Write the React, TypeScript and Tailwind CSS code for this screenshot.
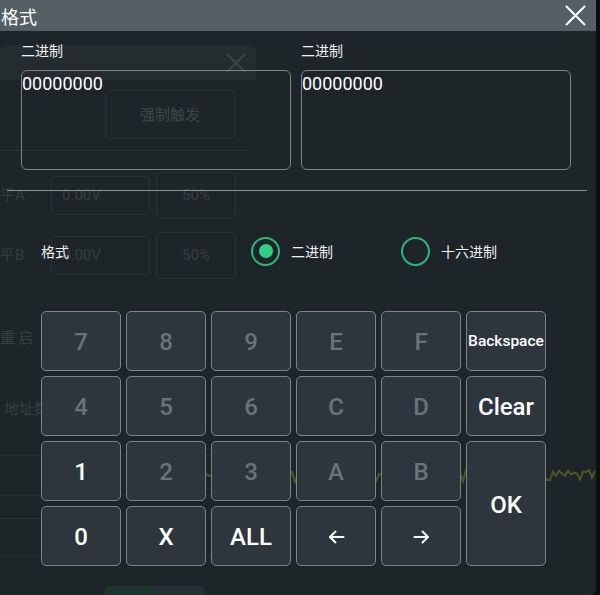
import React from 'react';

const CJK = "font-['Noto_Sans_CJK_SC','Noto_Sans',sans-serif]";

type Key = { label: string; on?: boolean; small?: boolean; tall?: boolean; arrow?: 'left' | 'right' };

const KEYS: Key[] = [
  { label: '7' }, { label: '8' }, { label: '9' }, { label: 'E' }, { label: 'F' }, { label: 'Backspace', on: true, small: true },
  { label: '4' }, { label: '5' }, { label: '6' }, { label: 'C' }, { label: 'D' }, { label: 'Clear', on: true },
  { label: '1', on: true }, { label: '2' }, { label: '3' }, { label: 'A' }, { label: 'B' }, { label: 'OK', on: true, tall: true },
  { label: '0', on: true }, { label: 'X', on: true }, { label: 'ALL', on: true },
  { label: '←', on: true, arrow: 'left' }, { label: '→', on: true, arrow: 'right' },
];

// noisy trace for the scope behind the dialog
const wave = (() => {
  let s = 7;
  const pts: string[] = [];
  for (let x = 0; x <= 400; x += 3) {
    s = (s * 9301 + 49297) % 233280;
    const y = 10 + ((s / 233280) - 0.5) * 12;
    pts.push(`${x},${y.toFixed(1)}`);
  }
  return pts.join(' ');
})();

function Arrow({ dir }: { dir: 'left' | 'right' }) {
  return (
    <svg width="17" height="14" viewBox="0 0 17 14" fill="none" stroke="white" strokeWidth="2" strokeLinecap="round" strokeLinejoin="round">
      {dir === 'left'
        ? <><path d="M15.5 7H2" /><path d="M7.5 1.5 2 7l5.5 5.5" /></>
        : <><path d="M1.5 7H15" /><path d="M9.5 1.5 15 7l-5.5 5.5" /></>}
    </svg>
  );
}

function GhostPanel() {
  return (
    <div className={`w-[260px] h-full overflow-hidden pt-[45px] flex flex-col [&>*]:shrink-0 ${CJK}`}>
      <div className="h-[35px] rounded-t-[6px] bg-[#242c2f] flex items-center justify-end pr-[10px]">
        <svg width="20" height="20" viewBox="0 0 20 20" stroke="#3b4447" strokeWidth="2"><path d="M1 1l18 18M19 1 1 19" /></svg>
      </div>
      <div className="mt-[10px] ml-[105px] w-[130px] h-[49px] rounded-[5px] border border-[#2b3336] flex items-center justify-center text-[15px] text-[#3d4548]">强制触发</div>
      <div className="mt-[11px] w-[250px] h-px bg-[#2b3336]" />
      {['平A', '平B'].map((l, i) => (
        <div key={l} className={`${i === 0 ? 'mt-[21px]' : 'mt-[13px]'} h-[47px] flex items-center text-[15px] text-[#363e41]`}>
          <span className="w-[51px] font-['Roboto',sans-serif]">{l}</span>
          <div className="w-[99px] h-[39px] rounded-[5px] border border-[#2b3336] flex items-center pl-[10px] font-['Roboto',sans-serif]">0.00V</div>
          <div className="ml-[6px] w-[80px] h-[47px] rounded-[5px] border border-[#2b3336] flex items-center justify-center font-['Roboto',sans-serif]">50%</div>
        </div>
      ))}
      <div className="mt-[44px] h-[28px] flex items-center text-[15px] text-[#363e41] gap-[14px]">
        <span>重 启</span>
        <span className="w-[26px] h-[26px] rounded-full border-2 border-[#1f3a30]" />
      </div>
      <div className="mt-[43px] h-[28px] flex items-center pl-[4px] text-[15px] text-[#363e41]">地址数</div>
      <div className="mt-[33px] w-[250px] h-px bg-[#262e31]" />
      <div className="mt-[39px] w-[250px] h-px bg-[#262e31]" />
      <div className="mt-[22px] w-[250px] h-px bg-[#262e31]" />
      <div className="mt-[37px] w-[250px] h-px bg-[#262e31]" />
      <div className="mt-[29px] ml-[105px] w-[100px] h-[12px] rounded-t-[5px] bg-[linear-gradient(90deg,#1d352d,#1d352d_50%,#263034_50%)]" />
    </div>
  );
}

export default function App() {
  return (
    <div className="relative w-[600px] h-[595px] overflow-hidden bg-[#0c0f10]">
      {/* screen behind the dialog */}
      <div className="w-[596px] h-full bg-[#1e2528] rounded-br-[6px] flex">
        <GhostPanel />
        <div className="flex-1 pt-[466px]">
          <svg width="400" height="20" viewBox="0 0 400 20" className="-ml-[60px]">
            <polyline points={wave} fill="none" stroke="#4d5725" strokeWidth="2" />
          </svg>
        </div>
      </div>

      {/* format dialog */}
      <div className="absolute inset-y-0 left-0 w-[596px] flex flex-col">
        <div className="h-[31px] bg-[#535f64] flex items-center justify-between">
          <span className={`${CJK} text-[18px] leading-none text-white pl-[1px]`}>格式</span>
          <svg width="21" height="21" viewBox="0 0 21 21" stroke="white" strokeWidth="2" className="mr-[10px]">
            <path d="M1 1l19 19M20 1 1 20" />
          </svg>
        </div>

        <div className="flex gap-[10px] pl-[21px] pt-[9px]">
          {[0, 1].map(i => (
            <div key={i} className="flex flex-col w-[270px]">
              <span className={`${CJK} h-[20px] text-[14px] leading-[20px] text-[#eef1f2]`}>二进制</span>
              <div className="mt-[10px] h-[100px] rounded-[6px] border border-[#7c8488] pt-[2px] font-['Roboto',sans-serif] text-[18px] leading-[22px] text-white">
                00000000
              </div>
            </div>
          ))}
        </div>

        <div className="mt-[20px] ml-[7px] w-[580px] h-px bg-[#8a9195]" />

        <div className={`${CJK} mt-[45px] h-[30px] flex items-center pl-[41px] text-[14px] text-[#eef1f2]`}>
          <span className="w-[210px]">格式</span>
          <span className="w-[29px] h-[29px] rounded-full border-[2.5px] border-[#2cb67b] flex items-center justify-center">
            <span className="w-[14px] h-[14px] rounded-full bg-[#2fcf86]" />
          </span>
          <span className="ml-[11px] w-[110px]">二进制</span>
          <span className="w-[29px] h-[29px] rounded-full border-[2.5px] border-[#2cb67b]" />
          <span className="ml-[11px]">十六进制</span>
        </div>

        <div className="mt-[45px] ml-[41px] grid grid-cols-[repeat(6,80px)] grid-rows-[repeat(4,60px)] gap-[5px] font-['Roboto',sans-serif] font-medium">
          {KEYS.map(k => (
            <div
              key={k.label}
              className={`rounded-[5px] border border-[#7b8489] bg-[#2d363d] flex items-center justify-center whitespace-nowrap leading-none pt-[2px]
                ${k.small ? 'text-[15.5px]' : 'text-[24px]'}
                ${k.on ? 'text-white' : 'text-[#6a7378]'}
                ${k.tall ? 'row-span-2' : ''}`}
            >
              {k.arrow ? <Arrow dir={k.arrow} /> : k.label}
            </div>
          ))}
        </div>
      </div>
    </div>
  );
}
